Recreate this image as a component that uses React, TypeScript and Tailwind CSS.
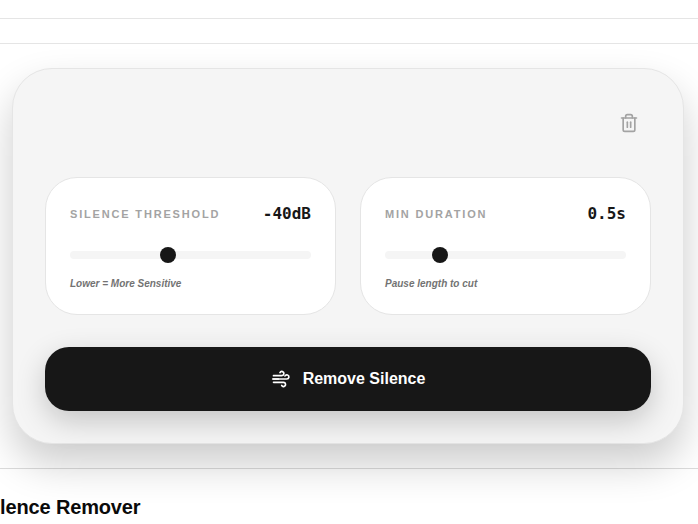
import { Trash2 } from 'lucide-react';

interface SliderCardProps {
  label: string;
  value: string;
  hint: string;
  percent: number;
}

function SliderCard({ label, value, hint, percent }: SliderCardProps) {
  return (
    <div className="flex h-[138px] flex-col rounded-[32px] border border-[#e5e5e5] bg-white px-6 pt-6">
      <div className="flex h-[24px] items-center justify-between">
        <span className="text-[11px] font-bold tracking-[0.166em] text-[#a3a3a3]">{label}</span>
        <span className="font-['DejaVu_Sans_Mono',monospace] text-base font-bold text-[#171717]">{value}</span>
      </div>
      <div className="relative mt-[25px] h-2 rounded-full bg-[#f5f5f5]">
        <div
          className="absolute top-1/2 h-4 w-4 -translate-x-1/2 -translate-y-1/2 rounded-full bg-[#171717]"
          style={{ left: `${percent}%` }}
        />
      </div>
      <p className="mt-[17px] text-[10px] leading-[15px] font-bold text-[#737373] italic">{hint}</p>
    </div>
  );
}

function WindLines() {
  return (
    <svg width="20" height="20" viewBox="0 0 24 24" fill="none" stroke="currentColor" strokeWidth="2" strokeLinecap="round" strokeLinejoin="round">
      <path d="M3 8h10a2.5 2.5 0 1 0-2.2-3.7" />
      <path d="M2 12h17a2.5 2.5 0 1 0-2.2-3.7" />
      <path d="M3 16h12a2.5 2.5 0 1 1-2.2 3.7" />
      <path d="M3 12h6" />
    </svg>
  );
}

export default function App() {
  return (
    <div className="h-[524px] w-[698px] overflow-hidden bg-white font-['Liberation_Sans',sans-serif]">
      <div className="h-[19px] border-b border-[#e5e5e5]" />
      <div className="h-[25px] border-b border-[#e5e5e5]" />
      <div className="h-[425px] border-b border-[#dcdcdc] pt-[24px] pl-3">
        <div className="h-[376px] w-[672px] rounded-[40px] border border-[#e5e5e5] bg-[#f5f5f5] px-8 pt-8 shadow-[0_20px_40px_rgba(0,0,0,0.2)]">
          <div className="flex h-[44px] justify-end pr-[12px]">
            <Trash2 className="mt-[12px] h-5 w-5 text-[#a3a3a3]" />
          </div>
          <div className="mt-[32px] grid grid-cols-2 gap-6">
            <SliderCard label="SILENCE THRESHOLD" value="-40dB" hint="Lower = More Sensitive" percent={40.6} />
            <SliderCard label="MIN DURATION" value="0.5s" hint="Pause length to cut" percent={22.8} />
          </div>
          <button className="mt-8 flex h-16 w-full items-center justify-center gap-3 rounded-3xl bg-[#171717] text-base font-bold text-white shadow-[0_10px_30px_rgba(0,0,0,0.2)]">
            <WindLines />
            Remove Silence
          </button>
        </div>
      </div>
      <h2 className="mt-[26px] ml-[-18.5px] text-xl leading-[24px] font-bold tracking-[-0.15px] text-[#0a0a0a]">Silence Remover</h2>
    </div>
  );
}
